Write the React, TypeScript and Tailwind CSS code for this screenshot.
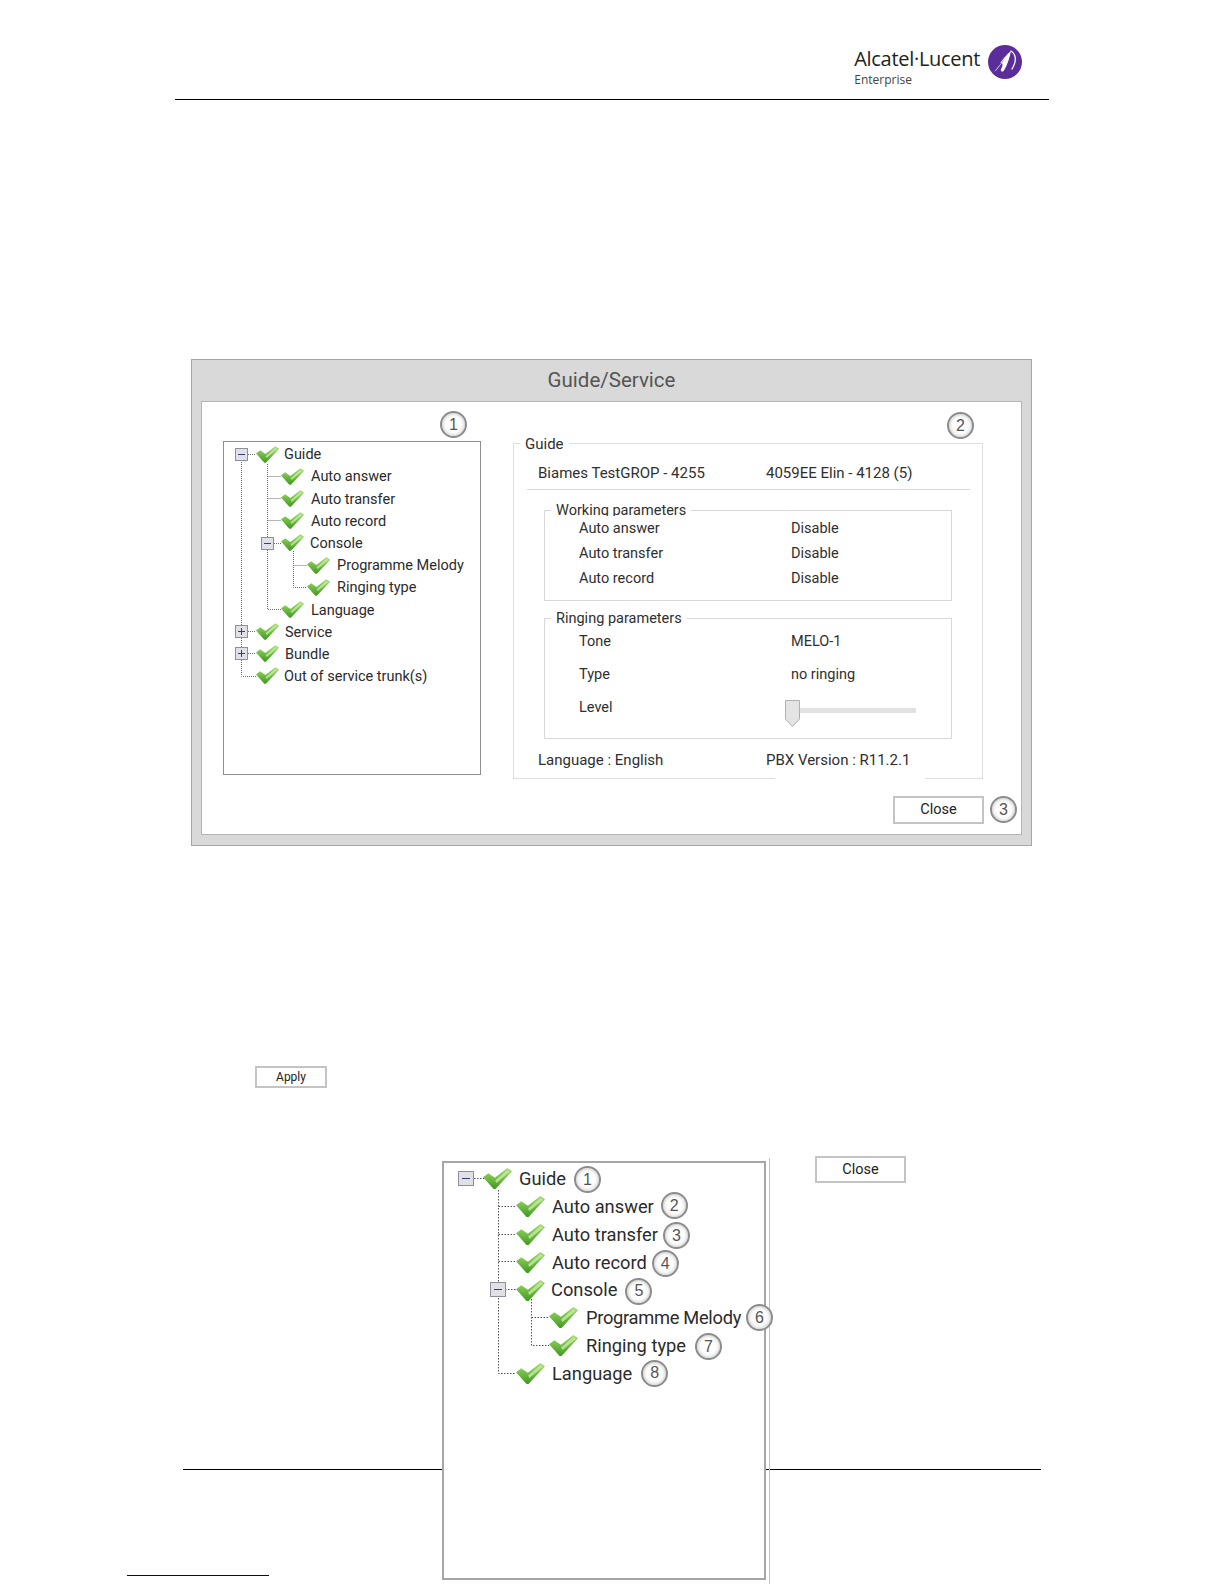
import type { ReactNode } from "react"

const CheckIcon = ({ className }: { className: string }) => (
  <svg viewBox="0 0 22 16" className={className}>
    <defs>
      <linearGradient id="checkGreen" x1="0" y1="0" x2="0" y2="1">
        <stop offset="0" stopColor="#a4dc6e" />
        <stop offset="1" stopColor="#3f9a1f" />
      </linearGradient>
    </defs>
    <path d="M0 7 L4 4 L9 7.5 L18.5 0 L22 2.5 L9.5 16 L8 16 Z" fill="url(#checkGreen)" />
    <path d="M9.2 9.6 L18.6 1.4 L20.6 2.8 L10.2 11.4 Z" fill="#c5eca2" opacity="0.8" />
  </svg>
)

const Expander = ({ open, className }: { open: boolean; className: string }) => (
  <span className={`absolute flex items-center justify-center border border-[#8f8f9c] bg-[#e0e0e8] ${className}`}>
    <span className="absolute w-[60%] h-px bg-[#3c3c78]" />
    {!open && <span className="absolute h-[60%] w-px bg-[#3c3c78]" />}
  </span>
)

const Badge = ({ children, className = "" }: { children: ReactNode; className?: string }) => (
  <span
    className={`flex items-center justify-center rounded-full bg-white border-2 border-[#8c8c8c] shadow-[inset_0_0_4px_#b4b4b4] text-[#555555] font-['Liberation_Sans',sans-serif] ${className}`}
  >
    {children}
  </span>
)

const WinButton = ({ label, className }: { label: string; className: string }) => (
  <button className={`flex items-center justify-center border-2 border-[#c4c4c4] bg-white text-[#222222] ${className}`}>
    {label}
  </button>
)

const smallIndent = ["ml-[32px]", "ml-[57px]", "ml-[83px]"]
const bigIndent = ["ml-[39px]", "ml-[72px]", "ml-[105px]"]

const smallRows = [
  { level: 0, label: "Guide", gap: "ml-[5px]" },
  { level: 1, label: "Auto answer", gap: "ml-[7px]" },
  { level: 1, label: "Auto transfer", gap: "ml-[7px]" },
  { level: 1, label: "Auto record", gap: "ml-[7px]" },
  { level: 1, label: "Console", gap: "ml-[6px]" },
  { level: 2, label: "Programme Melody", gap: "ml-[7px]" },
  { level: 2, label: "Ringing type", gap: "ml-[7px]" },
  { level: 1, label: "Language", gap: "ml-[7px]" },
  { level: 0, label: "Service", gap: "ml-[6px]" },
  { level: 0, label: "Bundle", gap: "ml-[6px]" },
  { level: 0, label: "Out of service trunk(s)", gap: "ml-[5px]" },
]

const bigRows = [
  { level: 0, label: "Guide", textGap: "ml-[7px]", badge: 1, gap: "ml-[8px] mt-[2px]" },
  { level: 1, label: "Auto answer", textGap: "ml-[7px]", badge: 2, gap: "ml-[7px] -mt-[2px]" },
  { level: 1, label: "Auto transfer", textGap: "ml-[7px]", badge: 3, gap: "ml-[5px] mt-[2px]" },
  { level: 1, label: "Auto record", textGap: "ml-[7px]", badge: 4, gap: "ml-[5px] mt-[3px]" },
  { level: 1, label: "Console", textGap: "ml-[6px]", badge: 5, gap: "ml-[8px] mt-[2px]" },
  { level: 2, label: "Programme Melody", textGap: "ml-[8px] tracking-[-0.3px]", badge: 6, gap: "ml-[5px]" },
  { level: 2, label: "Ringing type", textGap: "ml-[8px]", badge: 7, gap: "ml-[9px] mt-[2px]" },
  { level: 1, label: "Language", textGap: "ml-[7px]", badge: 8, gap: "ml-[9px]" },
]

const SmallTreeLines = () => (
  <svg className="absolute inset-0 w-full h-full" fill="none" stroke="#6e6e6e" strokeDasharray="1 1">
    <path d="M17.5 12V234.5H32 M22 12.5H32 M22 189.5H32 M22 211.5H32" />
    <path d="M43.5 22V167.5H57 M43.5 34.5H57 M43.5 56.5H57 M43.5 78.5H57 M48 101.5H57" />
    <path d="M69.5 109V145.5H83 M69.5 123.5H83" />
  </svg>
)

const BigTreeLines = () => (
  <svg className="absolute inset-0 w-full h-full" fill="none" stroke="#555555" strokeDasharray="1.5 1.5">
    <path d="M27 15.5H41" />
    <path d="M54.5 27V210.5H72 M54.5 43.5H72 M54.5 71.5H72 M54.5 98.5H72 M61 126.5H72" />
    <path d="M87.5 136V182.5H105 M87.5 154.5H105" />
  </svg>
)

const SmallTree = () => (
  <div className="relative mt-[8px] w-[258px] h-[334px] border border-[#8f8f8f] bg-white pt-px text-[14.5px] text-[#2b2b2b]">
    <SmallTreeLines />
    <Expander open className="left-[11px] top-[6px] w-[13px] h-[13px]" />
    <Expander open className="left-[37px] top-[95px] w-[13px] h-[13px]" />
    <Expander open={false} className="left-[11px] top-[183px] w-[13px] h-[13px]" />
    <Expander open={false} className="left-[11px] top-[205px] w-[13px] h-[13px]" />
    {smallRows.map((row) => (
      <div key={row.label} className="relative flex items-center h-[22.2px]">
        <CheckIcon className={`w-[23px] h-[17px] shrink-0 ${smallIndent[row.level]}`} />
        <span className={`whitespace-nowrap mt-[2px] ${row.gap}`}>{row.label}</span>
      </div>
    ))}
  </div>
)

const BigTree = () => (
  <div className="relative w-[324px] h-[419px] border-2 border-[#a6a6a6] bg-white pt-[2px] text-[18.3px] text-[#2b2b2b]">
    <BigTreeLines />
    <Expander open className="left-[14px] top-[8px] w-[16px] h-[15px]" />
    <Expander open className="left-[46px] top-[119px] w-[16px] h-[15px]" />
    {bigRows.map((row) => (
      <div key={row.label} className="relative flex items-center h-[27.8px]">
        <CheckIcon className={`w-[29px] h-[21px] shrink-0 ${bigIndent[row.level]}`} />
        <span className={`whitespace-nowrap ${row.textGap}`}>{row.label}</span>
        <Badge className={`w-[27px] h-[27px] shrink-0 text-[16px] ${row.gap}`}>{row.badge}</Badge>
      </div>
    ))}
  </div>
)

const SliderThumb = () => (
  <svg viewBox="0 0 15 27" className="w-[15px] h-[27px] shrink-0">
    <path d="M0.5 0.5H14.5V19L7.5 26.5L0.5 19Z" fill="#e4e4e4" stroke="#b0b0b0" />
  </svg>
)

const ParamRow = ({ label, value, className }: { label: string; value: ReactNode; className: string }) => (
  <div className={`grid grid-cols-[212px_1fr] items-center pl-[34px] bg-white ${className}`}>
    <span>{label}</span>
    <span>{value}</span>
  </div>
)

const Legend = ({ children, className }: { children: ReactNode; className: string }) => (
  <legend className={`h-[20px] leading-[22px] px-[5px] ${className}`}>{children}</legend>
)

const GuideGroup = () => (
  <fieldset className="relative w-[470px] h-[346px] border border-[#dedede] text-[15px] text-[#2f2f2f]">
    <Legend className="ml-[6px]">Guide</Legend>
    <div className="grid grid-cols-[228px_1fr] items-center h-[24px] mt-[8px] pl-[24px]">
      <span>Biames TestGROP - 4255</span>
      <span>4059EE Elin - 4128 (5)</span>
    </div>
    <div className="h-px w-[443px] ml-[13px] mt-[4px] bg-[#d8d8d8]" />

    <fieldset className="w-[408px] h-[101px] ml-[30px] mt-[10px] border border-[#d8d8d8] text-[14.5px]">
      <Legend className="ml-[6px]">Working parameters</Legend>
      <ParamRow label="Auto answer" value="Disable" className="h-[25px] -mt-[4px] relative" />
      <ParamRow label="Auto transfer" value="Disable" className="h-[25px]" />
      <ParamRow label="Auto record" value="Disable" className="h-[25px]" />
    </fieldset>

    <fieldset className="w-[408px] h-[131px] ml-[30px] mt-[7px] border border-[#d8d8d8] text-[14.5px]">
      <Legend className="ml-[6px]">Ringing parameters</Legend>
      <ParamRow label="Tone" value="MELO-1" className="h-[33px] -mt-[3px]" />
      <ParamRow label="Type" value="no ringing" className="h-[33px]" />
      <ParamRow
        label="Level"
        className="h-[33px]"
        value={
          <span className="flex items-center -ml-[6px] mt-[9px] -mb-[3px]">
            <SliderThumb />
            <span className="w-[116px] h-[5px] bg-[#e2e2e2] -mt-[7px]" />
          </span>
        }
      />
    </fieldset>

    {/* white patch over the group borders, it is in the original picture */}
    <div className="absolute left-[261px] top-[292px] w-[150px] h-[45px] bg-white" />
    <div className="relative grid grid-cols-[228px_1fr] items-center h-[24px] mt-[9px] pl-[24px]">
      <span>Language : English</span>
      <span>PBX Version : R11.2.1</span>
    </div>
  </fieldset>
)

const GuideDialog = () => (
  <div className="w-[841px] h-[487px] ml-[191px] mt-[259px] flex flex-col border border-[#a6a6a6] bg-[#d9d9d9]">
    <div className="flex items-center justify-center h-[41px] shrink-0 text-[20.5px] text-[#555555]">Guide/Service</div>
    <div className="relative flex gap-[32px] flex-1 mx-[9px] mb-[10px] pl-[21px] pt-[31px] border border-[#b4b4b4] bg-white">
      <Badge className="absolute left-[238px] top-[9px] w-[27px] h-[27px] text-[16px]">1</Badge>
      <Badge className="absolute left-[745px] top-[10px] w-[27px] h-[27px] text-[16px]">2</Badge>
      <SmallTree />
      <div className="flex flex-col items-end w-[470px]">
        <GuideGroup />
        <WinButton label="Close" className="w-[91px] h-[28px] mt-[17px] mr-[-1px] text-[14.5px]" />
      </div>
      <Badge className="absolute left-[788px] top-[394px] w-[27px] h-[27px] text-[16px]">3</Badge>
    </div>
  </div>
)

const LogoMark = () => (
  <svg viewBox="0 0 34 34" className="w-[34px] h-[34px] shrink-0">
    <circle cx="17" cy="17" r="17" fill="#5b2d9b" />
    <path d="M6 27 C11 24 17 12 23 6 C21.5 13 19.5 20 16 25.5 C14 28 11.5 26 13.5 23 C15 21.5 15 17 12 18 C17 12 19 9 23 6 Z" fill="#ffffff" />
    <path d="M23 6 C28 9 29 16 24 24" fill="none" stroke="#ffffff" strokeWidth="1.3" strokeLinecap="round" />
  </svg>
)

const Header = () => (
  <header className="flex justify-end h-[100px] ml-[175px] mr-[175px] border-b border-black">
    <div className="flex items-start pt-[44px] mr-[27px]">
      <div className="flex flex-col mt-[2px]">
        <span className="text-[20px] leading-[26px] font-medium text-[#222222] font-['Open_Sans',sans-serif] tracking-[-0.3px]">Alcatel·Lucent</span>
        <span className="text-[12px] leading-[14px] mt-px text-[#444444] font-['Open_Sans',sans-serif]">Enterprise</span>
      </div>
      <div className="ml-[8px] mt-px">
        <LogoMark />
      </div>
    </div>
  </header>
)

export default function App() {
  return (
    <div className="relative w-[1224px] h-[1584px] overflow-hidden bg-white font-['Roboto',sans-serif]">
      <Header />
      <GuideDialog />
      <WinButton label="Apply" className="w-[72px] h-[22px] ml-[255px] mt-[220px] text-[12px] border-[#bdbdbd]" />

      {/* footer rule runs behind the big tree */}
      <div className="absolute left-[183px] top-[1469px] w-[858px] h-px bg-black" />

      <div className="relative flex items-start ml-[442px] mt-[73px]">
        <BigTree />
        <div className="w-px h-[426px] -mt-[3px] ml-[3px] bg-[#c4c4c4]" />
        <WinButton label="Close" className="w-[91px] h-[27px] -mt-[5px] ml-[45px] text-[14.5px] border-[#bdbdbd]" />
      </div>

      <div className="absolute left-[127px] top-[1575px] w-[142px] h-px bg-[#000080]" />
    </div>
  )
}
